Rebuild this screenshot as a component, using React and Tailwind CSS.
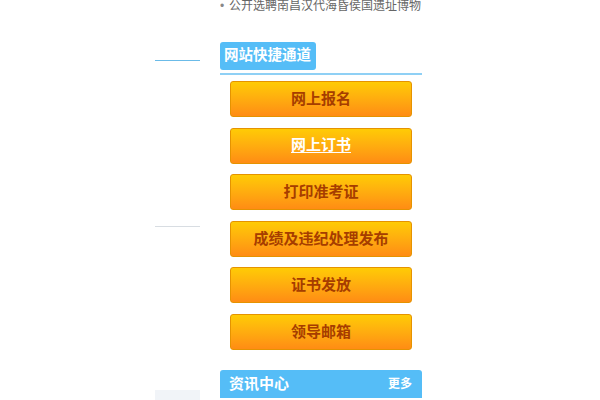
const links = ['网上报名', '网上订书', '打印准考证', '成绩及违纪处理发布', '证书发放', '领导邮箱'];

export default function App() {
  return (
    <div
      className="w-[600px] h-[400px] overflow-hidden bg-white flex pl-[155px] relative"
      style={{ fontFamily: '"Liberation Sans", "Noto Sans CJK SC", sans-serif' }}
    >
      {/* left column remnants */}
      <div className="w-[45px] flex flex-col">
        <div className="mt-[60px] h-px bg-[#6bbbe8]" />
        <div className="mt-[165px] h-px bg-[#d8dde2]" />
        <div className="mt-[163px] h-[12px] bg-[#f1f4f8]" />
      </div>

      {/* right column */}
      <div className="ml-[20px] w-[202px] flex flex-col">
        <div className="-mt-[2px] h-[16px] leading-[16px] text-[12px] text-[#666] whitespace-nowrap overflow-hidden">
          <span className="inline-block w-[9px] text-[#888]">•</span>
          公开选聘南昌汉代海昏侯国遗址博物
        </div>

        <div className="mt-[28px] border-b-2 border-[#8fd0f5] pb-[3px]">
          <div className="flex w-fit items-center h-[28px] pl-[4px] pr-[5px] rounded-[3px] bg-[#55bdf7] text-white font-bold text-[14.5px]">
            网站快捷通道
          </div>
        </div>

        <div className="mt-[6px] px-[10px] flex flex-col gap-[10.6px]">
          {links.map((t, i) => (
            <div
              key={t}
              className="h-[36px] rounded-[3px] border border-[#e59300] bg-gradient-to-b from-[#ffcb05] to-[#ff8c14] flex items-center justify-center"
            >
              <span
                className={`text-[15px] font-bold ${
                  i === 1 ? 'text-white underline underline-offset-2' : 'text-[#a63d00]'
                }`}
              >
                {t}
              </span>
            </div>
          ))}
        </div>

        <div className="mt-[20px] h-[28px] rounded-t-[3px] bg-[#55bdf7] flex items-center justify-between pl-[9px] pr-[10px]">
          <span className="text-white font-bold text-[15px]">资讯中心</span>
          <span className="text-white font-bold text-[12px]">更多</span>
        </div>
      </div>
    </div>
  );
}
